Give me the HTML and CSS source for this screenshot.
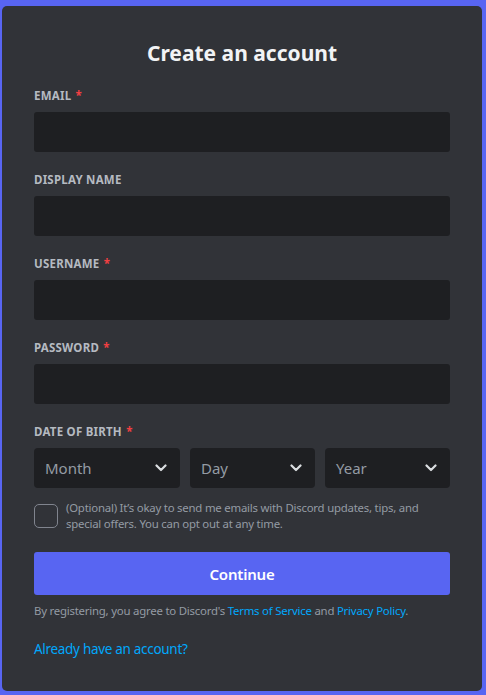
FILE: index.html
```html
<!DOCTYPE html>
<html lang="en">
<head>
<meta charset="utf-8">
<title>Create an account</title>
<link rel="stylesheet" href="styles.css">
</head>
<body>
<main class="card">
  <h1 class="title">Create an account</h1>
  <div class="field">
    <label class="label">EMAIL <span class="req">*</span></label>
    <div class="input"></div>
  </div>
  <div class="field">
    <label class="label">DISPLAY NAME</label>
    <div class="input"></div>
  </div>
  <div class="field">
    <label class="label">USERNAME <span class="req">*</span></label>
    <div class="input"></div>
  </div>
  <div class="field">
    <label class="label">PASSWORD <span class="req">*</span></label>
    <div class="input"></div>
  </div>
  <div class="field dob">
    <label class="label">DATE OF BIRTH <span class="req">*</span></label>
    <div class="selects">
      <div class="select"><span>Month</span><svg class="chev" viewBox="0 0 12 8" width="12" height="8"><path d="M1.5 1.5 L6 6 L10.5 1.5" fill="none" stroke="#dbdee1" stroke-width="2.2" stroke-linecap="round" stroke-linejoin="round"/></svg></div>
      <div class="select"><span>Day</span><svg class="chev" viewBox="0 0 12 8" width="12" height="8"><path d="M1.5 1.5 L6 6 L10.5 1.5" fill="none" stroke="#dbdee1" stroke-width="2.2" stroke-linecap="round" stroke-linejoin="round"/></svg></div>
      <div class="select"><span>Year</span><svg class="chev" viewBox="0 0 12 8" width="12" height="8"><path d="M1.5 1.5 L6 6 L10.5 1.5" fill="none" stroke="#dbdee1" stroke-width="2.2" stroke-linecap="round" stroke-linejoin="round"/></svg></div>
    </div>
  </div>
  <div class="optin">
    <div class="checkbox"></div>
    <p class="optin-text">(Optional) It’s okay to send me emails with Discord updates, tips, and special offers. You can opt out at any time.</p>
  </div>
  <button class="continue">Continue</button>
  <p class="terms">By registering, you agree to Discord's <a class="link">Terms of Service</a> and <a class="link">Privacy Policy</a>.</p>
  <a class="login link">Already have an account?</a>
</main>
</body>
</html>
```
FILE: styles.css
```css
html, body {
  margin: 0;
  height: 100%;
}
body {
  background: #5865f2;
  padding: 6px 4px 4px 2px;
  box-sizing: border-box;
  font-family: "Noto Sans", "Open Sans", sans-serif;
}
.card {
  background: #313338;
  border-radius: 5px;
  padding: 32px;
  box-sizing: border-box;
  width: 480px;
  height: 685px;
  display: flex;
  flex-direction: column;
}
.title {
  margin: 0 0 20px;
  color: #f2f3f5;
  font-size: 21px;
  line-height: 30px;
  font-weight: 700;
  text-align: center;
}
.field {
  display: flex;
  flex-direction: column;
  margin-bottom: 20px;
}
.label {
  color: #b5bac1;
  font-size: 11.5px;
  line-height: 16px;
  font-weight: 700;
  letter-spacing: 0.02em;
  margin-bottom: 8px;
}
.req {
  color: #f23f42;
  padding-left: 1px;
}
.input {
  height: 40px;
  background: #1e1f22;
  border-radius: 3px;
}
.dob {
  margin-bottom: 12px;
}
.selects {
  display: grid;
  grid-template-columns: 146fr 125fr 125fr;
  gap: 10px;
}
.select {
  height: 40px;
  background: #1e1f22;
  border-radius: 4px;
  display: flex;
  align-items: center;
  justify-content: space-between;
  padding: 0 13px 0 11px;
  color: #949ba4;
  font-size: 15px;
}
.chev {
  display: block;
}
.optin {
  display: flex;
  gap: 8px;
  align-items: flex-start;
  margin-bottom: 20px;
}
.checkbox {
  flex: none;
  width: 22px;
  height: 22px;
  border: 1px solid #80848e;
  border-radius: 5px;
  margin-top: 4px;
}
.optin-text {
  margin: 0;
  color: #949ba4;
  font-size: 11.4px;
  letter-spacing: -0.22px;
  line-height: 16px;
}
.continue {
  height: 44px;
  border: none;
  border-radius: 3px;
  background: #5865f2;
  color: #ffffff;
  font-family: inherit;
  font-size: 15px;
  letter-spacing: -0.2px;
  font-weight: 600;
  padding: 0;
}
.terms {
  margin: 8px 0 0;
  color: #949ba4;
  font-size: 11.4px;
  letter-spacing: -0.22px;
  line-height: 16px;
}
.link {
  color: #00a8fc;
  text-decoration: none;
}
.login {
  margin-top: 20px;
  font-size: 13.5px;
  letter-spacing: -0.3px;
  line-height: 20px;
}
```
